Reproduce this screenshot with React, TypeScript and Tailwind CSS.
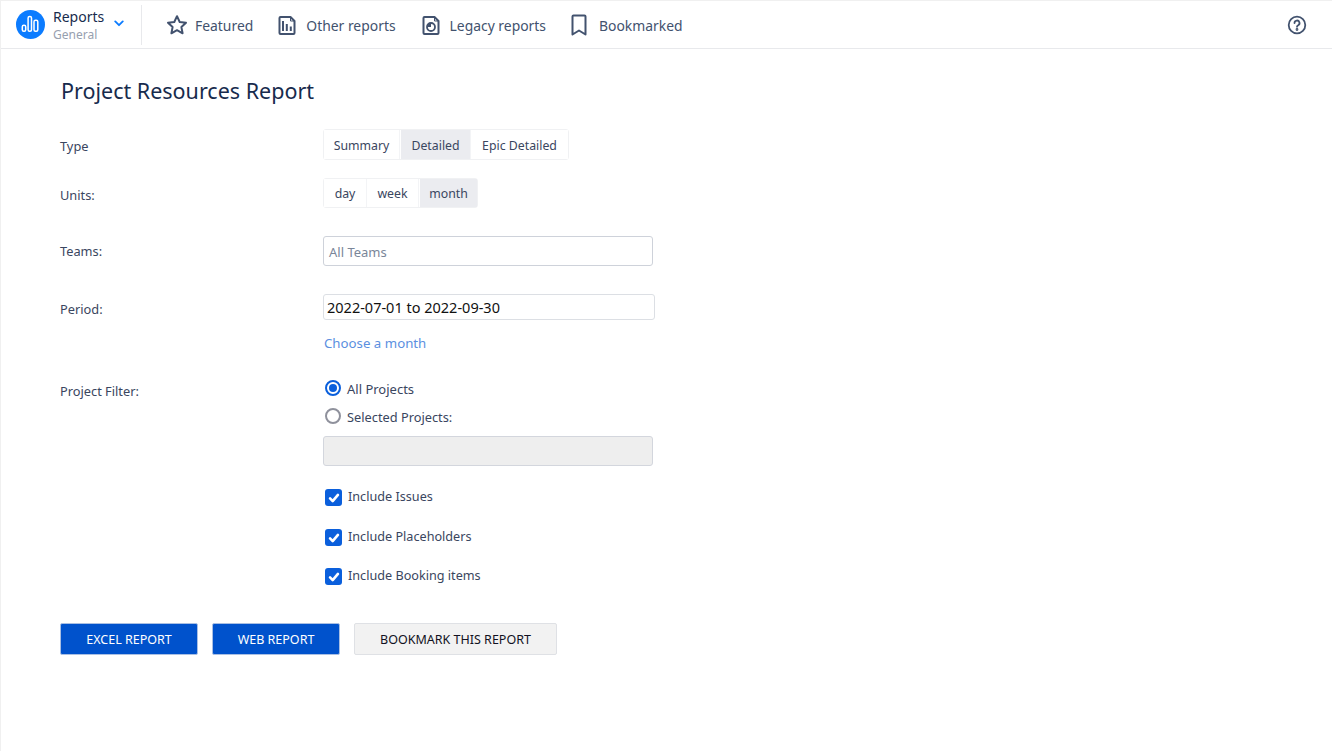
import React from "react";

const navIcon = "w-[24px] h-[24px] shrink-0 text-[#42526e]";

function Star() {
  return (
    <svg viewBox="0 0 24 24" className={navIcon} fill="none" stroke="currentColor" strokeWidth="2" strokeLinejoin="round">
      <path d="M12 3.200l2.700 5.800 6.300.8-4.600 4.300 1.200 6.200-5.600-3.100-5.600 3.100 1.200-6.200L3 9.800l6.300-.8z" />
    </svg>
  );
}
function DocChart() {
  return (
    <svg viewBox="0 0 24 24" className={navIcon} fill="none" stroke="currentColor" strokeWidth="2" strokeLinejoin="round">
      <path d="M5.500 4h10l4 4v12a1 1 0 0 1-1 1h-13a1 1 0 0 1-1-1V5a1 1 0 0 1 1-1z" />
      <path d="M8 8v10M11.800 11v7M15.800 13.500v4.500" strokeWidth="2" />
      <path d="M15.500 4.500v3.500h3.500" strokeWidth="1" />
    </svg>
  );
}
function DocPie() {
  return (
    <svg viewBox="0 0 24 24" className={navIcon} fill="none" stroke="currentColor" strokeWidth="2" strokeLinejoin="round">
      <path d="M5.500 4h10l4 4v12a1 1 0 0 1-1 1h-13a1 1 0 0 1-1-1V5a1 1 0 0 1 1-1z" />
      <circle cx="12" cy="14" r="4" strokeWidth="1.800" />
      <path d="M12 14v-4a4 4 0 0 0-4 4z" fill="currentColor" stroke="none" />
      <path d="M15.500 4.500v3.500h3.500" strokeWidth="1" />
    </svg>
  );
}
function Bookmark() {
  return (
    <svg viewBox="0 0 24 24" className={navIcon} fill="none" stroke="currentColor" strokeWidth="2" strokeLinejoin="round">
      <path d="M6.500 2.500h11a1 1 0 0 1 1 1V21.500l-6.500-4-6.500 4V3.500a1 1 0 0 1 1-1z" />
    </svg>
  );
}
function Check() {
  return (
    <span className="flex h-[17px] w-[17px] shrink-0 items-center justify-center rounded-[3px] bg-[#0a5fdc]">
      <svg viewBox="0 0 16 16" className="h-[14px] w-[14px]" fill="none" stroke="#ffffff" strokeWidth="3" strokeLinecap="round" strokeLinejoin="round">
        <path d="M3.500 8.500l3 3 6-7" />
      </svg>
    </span>
  );
}

function NavItem({ icon, label, className }: { icon: React.ReactNode; label: string; className: string }) {
  return (
    <div className={`flex items-center ${className}`}>
      {icon}
      <span className="pt-[3px] text-[13.900px] text-[#42526e]">{label}</span>
    </div>
  );
}

function Segment({ items, active, className }: { items: { t: string; w: string }[]; active: string; className: string }) {
  return (
    <div className={`flex w-fit rounded-[3px] border border-[#f0f1f3] ${className}`}>
      {items.map((i) => (
        <div
          key={i.t}
          className={`flex items-center justify-center border-r border-[#f3f4f6] pt-[3px] text-[12.300px] text-[#3a4660] last:border-r-0 ${i.w} ${
            i.t === active ? "ml-[1px] bg-[#ebecf0]" : "bg-white"
          }`}
        >
          {i.t}
        </div>
      ))}
    </div>
  );
}

function Row({ label, top, children }: { label: string; top: string; children: React.ReactNode }) {
  return (
    <div className="flex">
      <div className={`w-[263px] shrink-0 text-[12.800px] leading-[18px] text-[#3a4660] ${top}`}>{label}</div>
      <div>{children}</div>
    </div>
  );
}

function CheckRow({ label, className }: { label: string; className: string }) {
  return (
    <div className={`flex items-start pl-[2px] ${className}`}>
      <Check />
      <span className="ml-[6px] mt-[-1px] text-[12.650px] leading-[16px] text-[#3a4660]">{label}</span>
    </div>
  );
}

export default function App() {
  return (
    <div className="h-[751px] w-[1332px] overflow-hidden border-l border-t border-[#f0f0f0] bg-white font-['Noto_Sans',sans-serif]">
      <header className="flex h-[48px] items-center border-b border-[#e8e9ec] pl-[15px] pr-[25px]">
        <div className="flex h-[29px] w-[29px] shrink-0 items-center justify-center rounded-full bg-[#0c7cff]">
          <svg viewBox="0 0 29 29" className="h-[29px] w-[29px]" fill="none" stroke="#ffffff" strokeWidth="1.500">
            <rect x="6.300" y="15.300" width="3.400" height="6" rx="1.500" />
            <rect x="12.100" y="6.500" width="3.400" height="14.800" rx="1.500" />
            <rect x="18" y="10.300" width="3.800" height="11" rx="1.500" />
          </svg>
        </div>
        <div className="ml-[8px] flex w-[60px] flex-col pt-[2px]">
          <span className="text-[14px] leading-[17px] text-[#172b4d]">Reports</span>
          <span className="pt-[1px] text-[12px] leading-[17px] text-[#97a0af]">General</span>
        </div>
        <svg viewBox="0 0 12 8" className="mb-[2px] ml-[1px] h-[7px] w-[10px] shrink-0" fill="none" stroke="#0c7cff" strokeWidth="2.200" strokeLinecap="round" strokeLinejoin="round">
          <path d="M1.500 1.500L6 6l4.500-4.500" />
        </svg>
        <div className="ml-[17px] h-[40px] w-px bg-[#e8e9ec]" />
        <NavItem icon={<Star />} label="Featured" className="ml-[23px] gap-[6px]" />
        <NavItem icon={<DocChart />} label="Other reports" className="ml-[22px] gap-[7px]" />
        <NavItem icon={<DocPie />} label="Legacy reports" className="ml-[23px] gap-[7px]" />
        <NavItem icon={<Bookmark />} label="Bookmarked" className="ml-[21px] gap-[8px]" />
        <svg viewBox="0 0 20 20" className="ml-auto h-[20px] w-[20px]" fill="none" stroke="#42526e" strokeWidth="1.800" strokeLinecap="round">
          <circle cx="10" cy="10" r="8.300" />
          <path d="M7.500 8a2.500 2.500 0 1 1 3.700 2.200c-.8.450-1.200.9-1.200 1.600" />
          <circle cx="10" cy="14.500" r="0.500" fill="#42526e" />
        </svg>
      </header>

      <main className="pl-[59px]">
        <h1 className="ml-[1px] mt-[26px] text-[21.500px] font-normal leading-[32px] text-[#172b4d]">Project Resources Report</h1>

        <div className="mt-[22px]">
          <Row label="Type" top="pt-[8px]">
            <Segment
              className="h-[31px]"
              active="Detailed"
              items={[
                { t: "Summary", w: "w-[76px]" },
                { t: "Detailed", w: "w-[70px]" },
                { t: "Epic Detailed", w: "w-[97px]" },
              ]}
            />
          </Row>
        </div>
        <div className="mt-[18px]">
          <Row label="Units:" top="pt-[8px]">
            <Segment
              className="h-[30px]"
              active="month"
              items={[
                { t: "day", w: "w-[43px]" },
                { t: "week", w: "w-[52px]" },
                { t: "month", w: "w-[57px]" },
              ]}
            />
          </Row>
        </div>
        <div className="mt-[28px]">
          <Row label="Teams:" top="pt-[6px]">
            <div className="flex h-[30px] w-[330px] items-center rounded-[3px] border border-[#ced2da] pl-[5px] pt-[3px] text-[13px] text-[#7a8699]">All Teams</div>
          </Row>
        </div>
        <div className="mt-[28px]">
          <Row label="Period:" top="pt-[6px]">
            <div className="flex h-[26px] w-[332px] items-center rounded-[3px] border border-[#dcdfe4] pl-[3px] pt-[1px] text-[14.500px] text-[#111111]">2022-07-01 to 2022-09-30</div>
            <div className="ml-[1px] mt-[14px] text-[13.250px] leading-[18px] text-[#5b8fdf]">Choose a month</div>
          </Row>
        </div>
        <div className="mt-[28px]">
          <Row label="Project Filter:" top="pt-[2px]">
            <div className="flex h-[16px] items-center gap-[6px] pl-[2px]">
              <span className="flex h-[16px] w-[16px] shrink-0 items-center justify-center rounded-full border-2 border-[#0a5fdc]">
                <span className="h-[8px] w-[8px] rounded-full bg-[#0a5fdc]" />
              </span>
              <span className="pt-[3px] text-[13px] text-[#3a4660]">All Projects</span>
            </div>
            <div className="mt-[12px] flex h-[16px] items-center gap-[6px] pl-[2px]">
              <span className="h-[16px] w-[16px] shrink-0 rounded-full border-2 border-[#8f919c]" />
              <span className="pt-[3px] text-[12.800px] text-[#3a4660]">Selected Projects:</span>
            </div>
            <div className="mt-[12px] h-[30px] w-[330px] rounded-[3px] border border-[#d3d6dd] bg-[#eeeeee]" />
            <CheckRow label="Include Issues" className="mt-[23px]" />
            <CheckRow label="Include Placeholders" className="mt-[23px]" />
            <CheckRow label="Include Booking items" className="mt-[22px]" />
          </Row>
        </div>
        <div className="mt-[38px] flex gap-[14px]">
          <button className="h-[32px] w-[138px] rounded-[2px] border border-[#a9bfe3] bg-[#0052cc] pt-[2px] text-[12.500px] text-white">EXCEL REPORT</button>
          <button className="h-[32px] w-[128px] rounded-[2px] border border-[#a9bfe3] bg-[#0052cc] pt-[2px] text-[12.500px] text-white">WEB REPORT</button>
          <button className="h-[32px] w-[203px] rounded-[2px] border border-[#dfe1e5] bg-[#f2f2f2] pt-[2px] text-[12.500px] text-[#111122]">BOOKMARK THIS REPORT</button>
        </div>
      </main>
    </div>
  );
}
